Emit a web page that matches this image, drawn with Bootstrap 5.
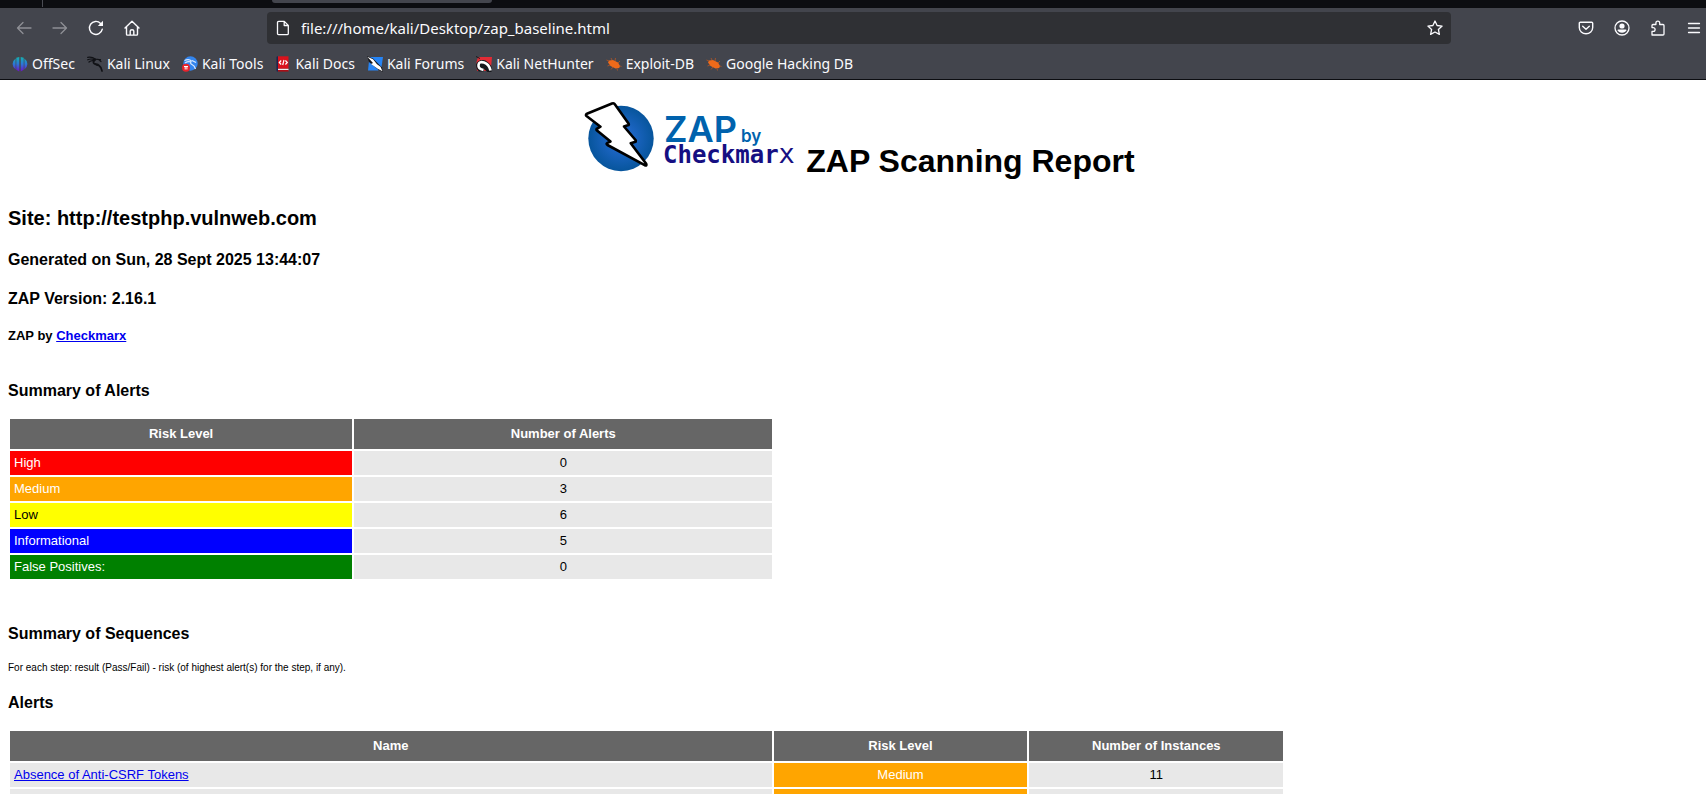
<!DOCTYPE html>
<html lang="en">
<head>
<meta charset="utf-8">
<meta name="viewport" content="width=device-width, initial-scale=1">
<title>ZAP Scanning Report</title>
<link href="https://cdn.jsdelivr.net/npm/bootstrap@5.3.0/dist/css/bootstrap.min.css" rel="stylesheet">
<style>
  body { font-family: "Liberation Sans", Arial, sans-serif; font-size: 13px; line-height: 18px; color: #000; background: #fff; }

  /* browser window */
  .browser { background: #43454d; color: #fbfbfe; font-family: "Noto Sans", sans-serif; border-bottom: 1px solid #0c0d11; }
  .tab-strip { height: 8px; background: #0c0d11; }
  .tab-divider { width: 1px; height: 7px; margin-left: 42px; background: #4a4c54; }
  .tab-edge { width: 220px; height: 3px; margin-left: 229px; background: #43454d; border-radius: 0 0 3px 3px; }
  .toolbar { padding: 4px 0 4px 6px; margin-right: -6px; }
  .tool-btn { width: 36px; height: 32px; padding: 0; border: 0; background: none; color: #fbfbfe; display: flex; align-items: center; justify-content: center; }
  .tool-btn:disabled { color: #8e8f95; }
  .address { height: 32px; margin: 0 117px; padding: 0 8px; gap: 10px; background: #2f3034; border-radius: 4px; }
  .address input { border: 0; outline: 0; padding: 0; background: none; color: #fbfbfe; font-size: 15px; line-height: 20px; }
  .bookmarks { gap: 12px; padding: 6px 12px 5px; }
  .bookmarks a { display: flex; align-items: center; gap: 4px; color: #fbfbfe; font-size: 14px; line-height: 20px; text-decoration: none; white-space: nowrap; }

  /* report */
  .report { padding: 18px 0 0 8px; margin-right: -5px; }
  .report h1 { font-size: 32px; line-height: 36px; font-weight: 700; text-align: center; margin: 0 0 27px; }
  .report h2 { font-size: 20px; line-height: 24px; font-weight: 700; margin: 0 0 20px; }
  .report h3 { font-size: 16px; line-height: 20px; font-weight: 700; margin: 0 0 19px; }
  .report h3.section-title { margin-bottom: 16px; }
  .report h4 { font-size: 13px; line-height: 16px; font-weight: 700; margin: 0 0 37px; }
  .report a { color: #0000ee; }
  .note { font-size: 10px; line-height: 12px; margin: 0 0 19px; padding-top: 2px; }
  .results { border-collapse: separate; border-spacing: 2px; table-layout: fixed; }
  .results th { height: 30px; padding: 0 4px; background: #666; color: #fff; text-align: center; }
  .results td { height: 24px; padding: 3px 4px; background: #e8e8e8; }
  .alert-summary { width: 45%; margin-bottom: 43px; }
  .alert-list { width: 75%; }
  .results .risk-3 { background: red; color: #fff; }
  .results .risk-2 { background: orange; color: #fff; }
  .results .risk-1 { background: yellow; color: #000; }
  .results .risk-0 { background: blue; color: #fff; }
  .results .risk-fp { background: green; color: #fff; }
</style>
<script src="https://cdn.jsdelivr.net/npm/bootstrap@5.3.0/dist/js/bootstrap.bundle.min.js" defer></script>
</head>
<body class="vh-100 overflow-hidden">

<header class="browser">
  <div class="tab-strip d-flex align-items-start">
    <div class="tab-divider"></div>
    <div class="tab-edge"></div>
  </div>
  <div class="toolbar d-flex align-items-center">
    <button class="tool-btn" type="button" aria-label="Back" disabled>
      <svg width="16" height="16" viewBox="0 0 16 16" fill="none" stroke="currentColor" stroke-width="1.3" stroke-linecap="round" stroke-linejoin="round"><path d="M15 8H1.6M7 2.5 1.5 8 7 13.5"/></svg>
    </button>
    <button class="tool-btn" type="button" aria-label="Forward" disabled>
      <svg width="16" height="16" viewBox="0 0 16 16" fill="none" stroke="currentColor" stroke-width="1.3" stroke-linecap="round" stroke-linejoin="round"><path d="M1 8h13.4M9 2.5 14.5 8 9 13.5"/></svg>
    </button>
    <button class="tool-btn" type="button" aria-label="Reload">
      <svg width="16" height="16" viewBox="0 0 16 16" fill="none" stroke="currentColor" stroke-width="1.4" stroke-linecap="round"><path d="M14.3 9.2A6.5 6.5 0 1 1 12.6 3.4"/><path d="M15 .8V6H9.800z" fill="currentColor" stroke="none"/></svg>
    </button>
    <button class="tool-btn" type="button" aria-label="Home">
      <svg width="16" height="16" viewBox="0 0 16 16" fill="none" stroke="currentColor" stroke-width="1.4" stroke-linecap="round" stroke-linejoin="round"><path d="M1 8 8 1.2 15 8M2.5 7v7.200q0 .9.9.9h9.200q.9 0 .9-.9V7M6.200 15v-4q0-1.300 1.800-1.300T9.800 11v4"/></svg>
    </button>
    <div class="address flex-fill d-flex align-items-center">
      <svg class="flex-shrink-0" width="16" height="16" viewBox="0 0 16 16" fill="none" stroke="#fbfbfe" stroke-width="1.3" stroke-linejoin="round"><path d="M3.700 1.400h5.600l4 4v8q0 1.200-1.200 1.200H3.700q-1.200 0-1.200-1.200V2.600q0-1.200 1.200-1.200zM9.200 1.600v3.900h4"/></svg>
      <input class="flex-fill" type="text" aria-label="Address" value="file:///home/kali/Desktop/zap_baseline.html">
      <button class="tool-btn w-auto" type="button" aria-label="Bookmark this page">
        <svg width="16" height="16" viewBox="0 0 16 16" fill="none" stroke="currentColor" stroke-width="1.3" stroke-linejoin="round"><path d="m8 1 2.100 4.500 5 .6-3.700 3.400 1 4.900L8 12l-4.400 2.400 1-4.900L.9 6.100l5-.6z"/></svg>
      </button>
    </div>
    <button class="tool-btn" type="button" aria-label="Save to Pocket">
      <svg width="16" height="16" viewBox="0 0 16 16" fill="none" stroke="currentColor" stroke-width="1.4" stroke-linecap="round" stroke-linejoin="round"><path d="M2.300 2.200h11.400q1 0 1 1v4.300a6.700 6.300 0 0 1-13.400 0V3.200q0-1 1-1zM4.700 6.300 8 9.300l3.300-3"/></svg>
    </button>
    <button class="tool-btn" type="button" aria-label="Account">
      <svg width="16" height="16" viewBox="0 0 16 16" fill="currentColor"><circle cx="8" cy="8" r="7" fill="none" stroke="currentColor" stroke-width="1.3"/><circle cx="8" cy="6" r="2.600"/><path d="M4 9.500h8q.4 0 .3.800a4.400 3 0 0 1-8.600 0q-.1-.8.300-.8z"/></svg>
    </button>
    <button class="tool-btn" type="button" aria-label="Extensions">
      <svg width="16" height="16" viewBox="0 0 16 16" fill="none" stroke="currentColor" stroke-width="1.3" stroke-linejoin="round"><path d="M2 15h11q1 0 1-1V5.500q0-1-1-1H9.700V3A1.900 1.900 0 0 0 5.900 3v1.500H3q-1 0-1 1V7.600h1.200a1.900 1.900 0 0 1 0 3.800H2z"/></svg>
    </button>
    <button class="tool-btn" type="button" aria-label="Menu">
      <svg width="16" height="16" viewBox="0 0 16 16" stroke="currentColor" stroke-width="1.3" stroke-linecap="round"><path d="M2.500 3.500h11M2.500 8h11M2.500 12.500h11"/></svg>
    </button>
  </div>
  <nav class="bookmarks d-flex" aria-label="Bookmarks">
    <a href="#">
      <svg width="16" height="16" viewBox="0 0 16 16"><defs><linearGradient id="os" gradientUnits="userSpaceOnUse" x1="0" y1="1" x2="0" y2="15"><stop offset="0" stop-color="#13b3b0"/><stop offset=".5" stop-color="#2b78d8"/><stop offset="1" stop-color="#6a16c9"/></linearGradient></defs><path fill="url(#os)" d="M3.600 2.400v11.200Q.6 11.500.6 8t3-5.600zM4.300 1.700 7.300 1v14.500l-3-1.800zM8.700 1l3 .7v12l-3 1.800zM12.400 2.400q3 2.100 3 5.600t-3 5.600z"/></svg>
      OffSec</a>
    <a href="#">
      <svg width="16" height="16" viewBox="0 0 16 16" fill="none" stroke="#111216" stroke-linecap="round"><path stroke-width="1.2" d="M.7 1.300Q5 .5 8.500 3.200M.7 3.800Q4 2.200 7.500 3.800M2 6Q4 4.300 7 4.700M8 3l3 .3 3 2.200M11 3.500l2.500.2"/><path stroke-width="1.8" d="M8.500 3.500Q5 6 7.500 7.800T12 9.400Q14.500 11 15 15M8 8l3 .6"/></svg>
      Kali Linux</a>
    <a href="#">
      <svg width="16" height="16" viewBox="0 0 16 16"><circle cx="8.500" cy="7.500" r="7.200" fill="#3385ee"/><path d="M2.500 4.500Q7 2.500 9.500 5M3 7Q6 5 9 6M9.500 5Q7.500 7.500 10 8.500T13.500 13M10 4.500l4 2" fill="none" stroke="#d9eaff" stroke-width="1.2"/><circle cx="4" cy="11.800" r="4" fill="#e8232c"/><path d="M2 10.500h4M3.200 10.500v3M4.900 10.500v3" fill="none" stroke="#fff" stroke-width="1"/></svg>
      Kali Tools</a>
    <a href="#">
      <svg width="16" height="16" viewBox="0 0 16 16"><path fill="#1d234d" d="M1.500 1.500Q1.500.3 3 .3v15.300q-1.500 0-1.500-1.200z"/><path fill="#d9121c" d="M3 .3h10.500v12.500H3z"/><path fill="#eee" d="M3 12.800h10.500v1.500H3z"/><path fill="#a80e16" d="M3 14h10.500v1.600H3z"/><path fill="none" stroke="#fff" stroke-width="1.2" d="M6.200 4.500 4.300 6.500l1.900 2M10.400 4.500l1.900 2-1.900 2M9 4l-1.300 5"/></svg>
      Kali Docs</a>
    <a href="#">
      <svg width="16" height="16" viewBox="0 0 16 16"><path fill="#2684f5" d="M3 1h13l-1.500 10L11 14.500H1L2 5z"/><path fill="#16171b" d="m0 0 6 2.500 9 9 1 4.500-5-2.500L2 6z"/><path fill="#fff" d="m.3.800 5.700 2.500 4 5 3.500 2.500 2 4.400-4.800-2.400L4 8 6 7z"/></svg>
      Kali Forums</a>
    <a href="#">
      <svg width="16" height="16" viewBox="0 0 16 16"><path fill="#e22b35" d="M2 1h14l-1 11-3 3H1L.5 6z"/><path fill="#17181c" d="M0 8.500Q2 3.500 7.500 4q4 .5 8 6.500v5.500h-4L8 13v2.500H3Q0 13 0 8.500z"/><path fill="none" stroke="#fff" stroke-width="2.600" d="M7.500 14Q2 13 2.500 9T8 6.500t6.500 8"/><path fill="none" stroke="#17181c" d="m0 .5 4 2"/></svg>
      Kali NetHunter</a>
    <a href="#">
      <svg width="16" height="16" viewBox="0 0 16 16"><path fill="#ee6a1a" d="M2 6.500 3 4.500 7 4l5 2.500 2 3.500-.8 2-3.700.5-5-2.500z"/><path fill="none" stroke="#b85723" stroke-width=".8" d="m6 4-1-2M9 5l.5-3M12 7l2-2M4 9l-2.500 1M7 11l-2 2.500M11 12.500l.5 2M3 5 .5 4M14 10l1.500.5"/></svg>
      Exploit-DB</a>
    <a href="#">
      <svg width="16" height="16" viewBox="0 0 16 16"><path fill="#ee6a1a" d="M2 6.500 3 4.500 7 4l5 2.500 2 3.500-.8 2-3.700.5-5-2.500z"/><path fill="none" stroke="#b85723" stroke-width=".8" d="m6 4-1-2M9 5l.5-3M12 7l2-2M4 9l-2.500 1M7 11l-2 2.500M11 12.500l.5 2M3 5 .5 4M14 10l1.500.5"/></svg>
      Google Hacking DB</a>
  </nav>
</header>

<main class="report">
  <h1>
    <svg class="align-baseline" width="213" height="74" viewBox="584 98 213 74" role="img" aria-label="ZAP by Checkmarx">
      <defs><radialGradient id="ball"><stop offset="0" stop-color="#2a6fdc"/><stop offset="1" stop-color="#07559c"/></radialGradient></defs>
      <circle cx="621" cy="138.500" r="32.700" fill="url(#ball)"/>
      <path d="M587.500 113.500 612 103.500q2-.8 3 1l13.500 19q1 1.500-.8 1.800l-3.700 1.200 11.500 13.500q1 1.800-.8 2l-4 1.200 15.500 20.500q1 2.300-1.500 1.500L607.500 145q-1.800-1.300 0-2.200l3-1.300-13.500-11q-1.300-1.200.3-2l3.200-1.800L586.500 116q-1.500-1.500 1-2.500z" fill="#fff" stroke="#000" stroke-width="2.600" stroke-linejoin="round"/>
      <text x="664" y="142" font-family="Inter, sans-serif" font-size="36" font-weight="600" fill="#0062ad">ZAP</text>
      <text x="741" y="142" font-family="Inter, sans-serif" font-size="17" font-weight="600" fill="#0062ad">by</text>
      <text x="663" y="163" font-family="DejaVu Sans Mono, monospace" font-size="24" font-weight="700" fill="#160f82">Checkmar<tspan font-weight="400" font-size="27">x</tspan></text>
    </svg>
    ZAP Scanning Report
  </h1>
  <h2>Site: http://testphp.vulnweb.com</h2>
  <h3>Generated on Sun, 28 Sept 2025 13:44:07</h3>
  <h3>ZAP Version: 2.16.1</h3>
  <h4>ZAP by <a href="https://checkmarx.com/">Checkmarx</a></h4>

  <h3 class="section-title">Summary of Alerts</h3>
  <table class="results alert-summary">
    <colgroup><col style="width:45%"><col style="width:55%"></colgroup>
    <thead><tr><th scope="col">Risk Level</th><th scope="col">Number of Alerts</th></tr></thead>
    <tbody>
      <tr><td class="risk-3">High</td><td class="text-center">0</td></tr>
      <tr><td class="risk-2">Medium</td><td class="text-center">3</td></tr>
      <tr><td class="risk-1">Low</td><td class="text-center">6</td></tr>
      <tr><td class="risk-0">Informational</td><td class="text-center">5</td></tr>
      <tr><td class="risk-fp">False Positives:</td><td class="text-center">0</td></tr>
    </tbody>
  </table>

  <h3 class="section-title">Summary of Sequences</h3>
  <p class="note">For each step: result (Pass/Fail) - risk (of highest alert(s) for the step, if any).</p>

  <h3 class="section-title">Alerts</h3>
  <table class="results alert-list">
    <colgroup><col style="width:60%"><col style="width:20%"><col style="width:20%"></colgroup>
    <thead><tr><th scope="col">Name</th><th scope="col">Risk Level</th><th scope="col">Number of Instances</th></tr></thead>
    <tbody>
      <tr><td><a href="#alert-1">Absence of Anti-CSRF Tokens</a></td><td class="risk-2 text-center">Medium</td><td class="text-center">11</td></tr>
      <tr><td></td><td class="risk-2"></td><td></td></tr>
    </tbody>
  </table>
</main>
</body>
</html>
